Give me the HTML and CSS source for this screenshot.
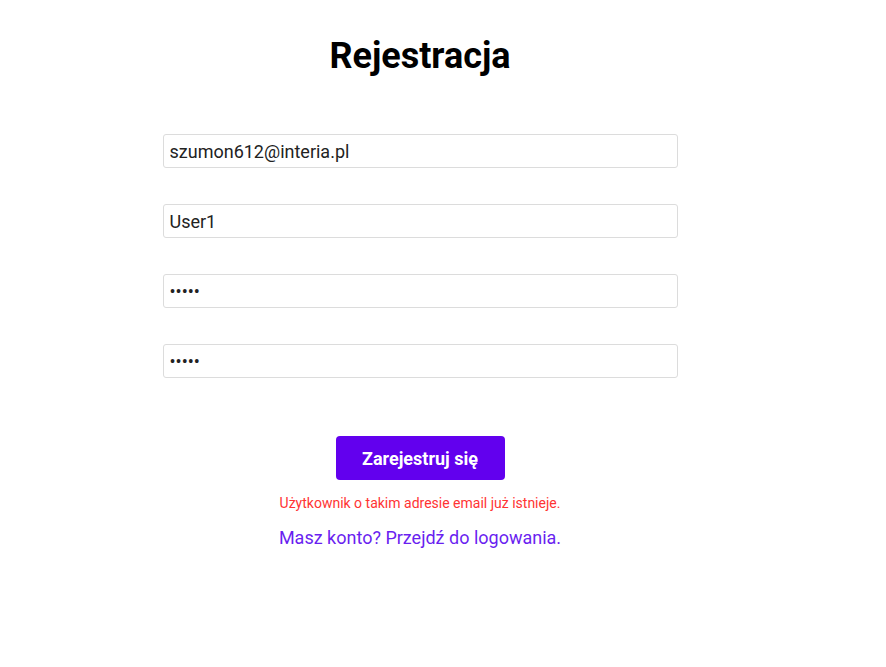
FILE: index.html
```html
<!DOCTYPE html>
<html lang="pl">
<head>
<meta charset="utf-8">
<title>Rejestracja</title>
<link rel="stylesheet" href="styles.css">
</head>
<body>
<main class="page">
  <h1 class="title">Rejestracja</h1>
  <form class="form">
    <input class="field" type="email" value="szumon612@interia.pl">
    <input class="field" type="text" value="User1">
    <input class="field" type="password" value="12345">
    <input class="field" type="password" value="12345">
    <button class="submit" type="button">Zarejestruj się</button>
  </form>
  <p class="error">Użytkownik o takim adresie email już istnieje.</p>
  <a class="link" href="#">Masz konto? Przejdź do logowania.</a>
</main>
</body>
</html>
```

FILE: styles.css
```css
html, body {
  margin: 0;
  padding: 0;
  background: #fff;
}
body {
  font-family: Roboto, "Liberation Sans", sans-serif;
}
.page {
  width: 840px;
  display: flex;
  flex-direction: column;
  align-items: center;
  padding-top: 35px;
}
.title {
  margin: 0;
  font-size: 36px;
  font-weight: 700;
  line-height: 42px;
  color: #000;
}
.form {
  display: flex;
  flex-direction: column;
  align-items: center;
  margin-top: 57px;
}
.field {
  box-sizing: border-box;
  width: 515px;
  height: 34px;
  margin: 0 0 36px;
  padding: 0 6px;
  border: 1px solid #dcdcdc;
  border-radius: 3px;
  font-family: Roboto, "Liberation Sans", sans-serif;
  font-size: 18px;
  color: #222;
  background: #fff;
  outline: none;
}
.field:last-of-type {
  margin-bottom: 58px;
}
.submit {
  width: 169px;
  height: 44px;
  border: none;
  border-radius: 4px;
  background: #6200ee;
  color: #fff;
  font-family: Roboto, "Liberation Sans", sans-serif;
  font-size: 18px;
  font-weight: 700;
  cursor: pointer;
}
.error {
  margin: 14px 0 0;
  font-size: 14px;
  line-height: 18px;
  color: #ff3333;
}
.link {
  margin-top: 15px;
  font-size: 18px;
  line-height: 22px;
  color: #6a1ff0;
  text-decoration: none;
}
```
